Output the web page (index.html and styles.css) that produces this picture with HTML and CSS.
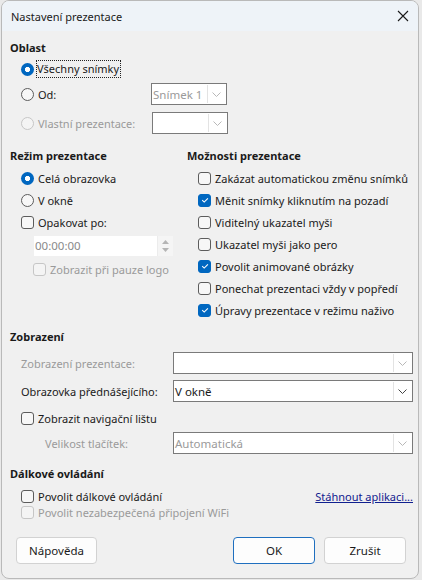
FILE: index.html
```html
<!DOCTYPE html>
<html lang="cs">
<head>
<meta charset="utf-8">
<title>Nastavení prezentace</title>
<link rel="stylesheet" href="styles.css">
</head>
<body>
<div class="window">
  <div class="titlebar">
    <span class="title">Nastavení prezentace</span>
    <svg class="close" width="12" height="12" viewBox="0 0 12 12"><path d="M1 1 L11 11 M11 1 L1 11" stroke="#1a1a1a" stroke-width="1.1" fill="none"/></svg>
  </div>
  <div class="content">
    <section class="sec-oblast">
      <h2 class="head">Oblast</h2>
      <div class="row o1">
        <span class="opt"><span class="radio checked"></span><span class="focus">Všechny snímky</span></span>
      </div>
      <div class="row o2">
        <span class="opt lab-o"><span class="radio"></span>Od:</span>
        <div class="select small"><span class="val dis">Snímek 1</span><span class="arrow"><svg width="9" height="5" viewBox="0 0 9 5"><path d="M0.5 0.5 L4.5 4.5 L8.5 0.5" stroke="#b8b8b8" fill="none"/></svg></span></div>
      </div>
      <div class="row o3">
        <span class="opt lab-o dis"><span class="radio disabled"></span>Vlastní prezentace:</span>
        <div class="select small"><span class="val"></span><span class="arrow"><svg width="9" height="5" viewBox="0 0 9 5"><path d="M0.5 0.5 L4.5 4.5 L8.5 0.5" stroke="#b8b8b8" fill="none"/></svg></span></div>
      </div>
    </section>

    <div class="cols">
      <section class="col-left">
        <h2 class="head">Režim prezentace</h2>
        <div class="row r22"><span class="opt"><span class="radio checked"></span>Celá obrazovka</span></div>
        <div class="row r22"><span class="opt"><span class="radio"></span>V okně</span></div>
        <div class="row r22"><span class="opt"><span class="check"></span>Opakovat po:</span></div>
        <div class="spin">
          <span class="spin-val">00:00:00</span>
          <span class="spin-btns">
            <svg width="7" height="4" viewBox="0 0 7 4"><path d="M0 4 L3.5 0 L7 4 Z" fill="#b5b5b5"/></svg>
            <svg width="7" height="4" viewBox="0 0 7 4"><path d="M0 0 L3.5 4 L7 0 Z" fill="#b5b5b5"/></svg>
          </span>
        </div>
        <div class="row r22 indent2"><span class="opt dis"><span class="check disabled"></span>Zobrazit při pauze logo</span></div>
      </section>
      <section class="col-right">
        <h2 class="head">Možnosti prezentace</h2>
        <div class="row r22"><span class="opt"><span class="check"></span>Zakázat automatickou změnu snímků</span></div>
        <div class="row r22"><span class="opt"><span class="check on"><svg width="12" height="12" viewBox="0 0 12 12"><path d="M3.2 6.2 L5.2 8.1 L8.9 4.3" stroke="#fff" stroke-width="1.1" fill="none"/></svg></span>Měnit snímky kliknutím na pozadí</span></div>
        <div class="row r22"><span class="opt"><span class="check"></span>Viditelný ukazatel myši</span></div>
        <div class="row r22"><span class="opt"><span class="check"></span>Ukazatel myši jako pero</span></div>
        <div class="row r22"><span class="opt"><span class="check on"><svg width="12" height="12" viewBox="0 0 12 12"><path d="M3.2 6.2 L5.2 8.1 L8.9 4.3" stroke="#fff" stroke-width="1.1" fill="none"/></svg></span>Povolit animované obrázky</span></div>
        <div class="row r22"><span class="opt"><span class="check"></span>Ponechat prezentaci vždy v popředí</span></div>
        <div class="row r22"><span class="opt"><span class="check on"><svg width="12" height="12" viewBox="0 0 12 12"><path d="M3.2 6.2 L5.2 8.1 L8.9 4.3" stroke="#fff" stroke-width="1.1" fill="none"/></svg></span>Úpravy prezentace v režimu naživo</span></div>
      </section>
    </div>

    <section class="sec-zobr">
      <h2 class="head">Zobrazení</h2>
      <div class="row z1">
        <span class="zlab dis">Zobrazení prezentace:</span>
        <div class="select wide"><span class="val"></span><span class="arrow"><svg width="9" height="5" viewBox="0 0 9 5"><path d="M0.5 0.5 L4.5 4.5 L8.5 0.5" stroke="#b8b8b8" fill="none"/></svg></span></div>
      </div>
      <div class="row z2">
        <span class="zlab">Obrazovka přednášejícího:</span>
        <div class="select wide"><span class="val">V okně</span><span class="arrow"><svg width="9" height="5" viewBox="0 0 9 5"><path d="M0.5 0.5 L4.5 4.5 L8.5 0.5" stroke="#444" fill="none"/></svg></span></div>
      </div>
      <div class="row z3"><span class="opt"><span class="check"></span>Zobrazit navigační lištu</span></div>
      <div class="row z4">
        <span class="zlab dis ind">Velikost tlačítek:</span>
        <div class="select wide"><span class="val dis">Automatická</span><span class="arrow"><svg width="9" height="5" viewBox="0 0 9 5"><path d="M0.5 0.5 L4.5 4.5 L8.5 0.5" stroke="#b8b8b8" fill="none"/></svg></span></div>
      </div>
    </section>

    <section class="sec-dalk">
      <h2 class="head">Dálkové ovládání</h2>
      <div class="row d1">
        <span class="opt"><span class="check"></span>Povolit dálkové ovládání</span>
        <a class="link" href="#">Stáhnout aplikaci...</a>
      </div>
      <div class="row d2"><span class="opt dis"><span class="check disabled"></span>Povolit nezabezpečená připojení WiFi</span></div>
    </section>

    <div class="buttons">
      <button class="btn">Nápověda</button>
      <span class="spacer"></span>
      <button class="btn default">OK</button>
      <button class="btn">Zrušit</button>
    </div>
  </div>
</div>
</body>
</html>
```

FILE: styles.css
```css
* { box-sizing: border-box; }
html, body { margin: 0; padding: 0; }
body {
  background: #e9e9e9;
  font-family: "Noto Sans", "Open Sans", sans-serif;
  font-size: 11px;
  color: #1a1a1a;
  width: 422px;
  height: 580px;
  overflow: hidden;
}
.window {
  margin-left: 1px;
  width: 418px;
  height: 579px;
  border: 1px solid #b9b9b9;
  border-radius: 8px;
  background: #f0f0f0;
  overflow: hidden;
  display: flex;
  flex-direction: column;
}
.titlebar {
  height: 30px;
  background: #eef3f8;
  display: flex;
  align-items: center;
  padding: 0 8px 0 9px;
  flex-shrink: 0;
}
.title { flex: 1; font-size: 11px; color: #1a1a1a; }
.close { margin-right: 1px; }
.content {
  padding: 9px 4px 0 8px;
  display: flex;
  flex-direction: column;
}
.head {
  margin: 0;
  font-size: 11px;
  font-weight: bold;
  height: 16px;
  line-height: 16px;
}
.row { display: flex; align-items: center; }
.opt { display: inline-flex; align-items: center; margin-left: 11px; white-space: nowrap; }
.dis { color: #9a9a9a; }
.radio {
  width: 13px; height: 13px;
  border-radius: 50%;
  border: 1px solid #5c5c5c;
  background: #f7f7f7;
  margin-right: 4px;
  flex-shrink: 0;
}
.radio.checked {
  border: none;
  background: radial-gradient(circle, #ffffff 0 2.3px, #0067c0 2.9px);
}
.radio.disabled { border-color: #c6c6c6; background: #f4f4f4; }
.check {
  width: 13px; height: 13px;
  border-radius: 3px;
  border: 1px solid #5c5c5c;
  background: #f7f7f7;
  margin-right: 4px;
  flex-shrink: 0;
  display: inline-flex;
}
.check.on { background: #0067c0; border-color: #0067c0; }
.check.on svg { margin: -0.5px; }
.check.disabled { border-color: #c6c6c6; background: #f4f4f4; }
.focus { outline: 1px dotted #222; outline-offset: 0; padding: 0 1px 1px 0; margin-left: -1px; }

.o1 { margin-top: 2px; height: 22px; }
.o2 { margin-top: 3px; height: 22px; }
.o3 { margin-top: 7px; height: 22px; }
.lab-o { width: 130px; }
.select {
  height: 22px;
  border: 1px solid #7a7a7a;
  background: #fff;
  display: flex;
  align-items: center;
  flex-shrink: 0;
}
.select.small { width: 76px; }
.select.wide { width: 240px; height: 22px; }
.select .val { flex: 1; padding-left: 1px; white-space: nowrap; overflow: hidden; font-size: 11.5px; }
.select .arrow {
  width: 18px; height: 18px;
  border-left: 1px solid #e3e3e3;
  display: flex; align-items: center; justify-content: center;
  margin-right: 1px;
}
.o3 .select { margin-left: 1px; }

.cols { display: flex; margin-top: 14px; }
.col-left { width: 177px; flex-shrink: 0; }
.col-right { flex: 1; }
.r22 { height: 22px; }
.col-left .head, .col-right .head { margin-bottom: 3px; }
.spin {
  margin-left: 24px;
  margin-top: 3px;
  width: 139px;
  height: 20px;
  display: flex;
  background: #fff;
}
.spin-val { flex: 1; color: #8a8a8a; padding-left: 1px; line-height: 20px; font-size: 11.5px; }
.spin-btns {
  width: 16px;
  background: #f5f5f5;
  border-left: 1px solid #ececec;
  display: flex; flex-direction: column; align-items: center; justify-content: space-evenly;
}
.indent2 .opt { margin-left: 23px; margin-top: 5px; }

.sec-zobr { margin-top: 8px; }
.zlab { margin-left: 11px; width: 152px; white-space: nowrap; }
.zlab.ind { margin-left: 35px; width: 128px; }
.z1 { margin-top: 7px; }
.z2 { margin-top: 6px; }
.z3 { margin-top: 5px; height: 22px; }
.z4 { margin-top: 3px; }
.sec-dalk { margin-top: 12px; }
.d1 { margin-top: 6px; height: 16px; justify-content: space-between; }
.d2 { height: 16px; }
.link { color: #10208f; text-decoration: underline; margin-right: 1px; }

.buttons { display: flex; margin-top: 17px; padding: 0 8px 0 6px; }
.spacer { flex: 1; }
.btn {
  font-family: inherit;
  font-size: 11.5px;
  color: #1a1a1a;
  width: 82px;
  height: 27px;
  background: #fdfdfd;
  border: 1px solid #d2d2d2;
  border-radius: 4px;
  margin: 0;
}
.btn:first-child { width: 81px; }
.btn.default { border-color: #1f6fbf; margin-right: 9px; }
```
